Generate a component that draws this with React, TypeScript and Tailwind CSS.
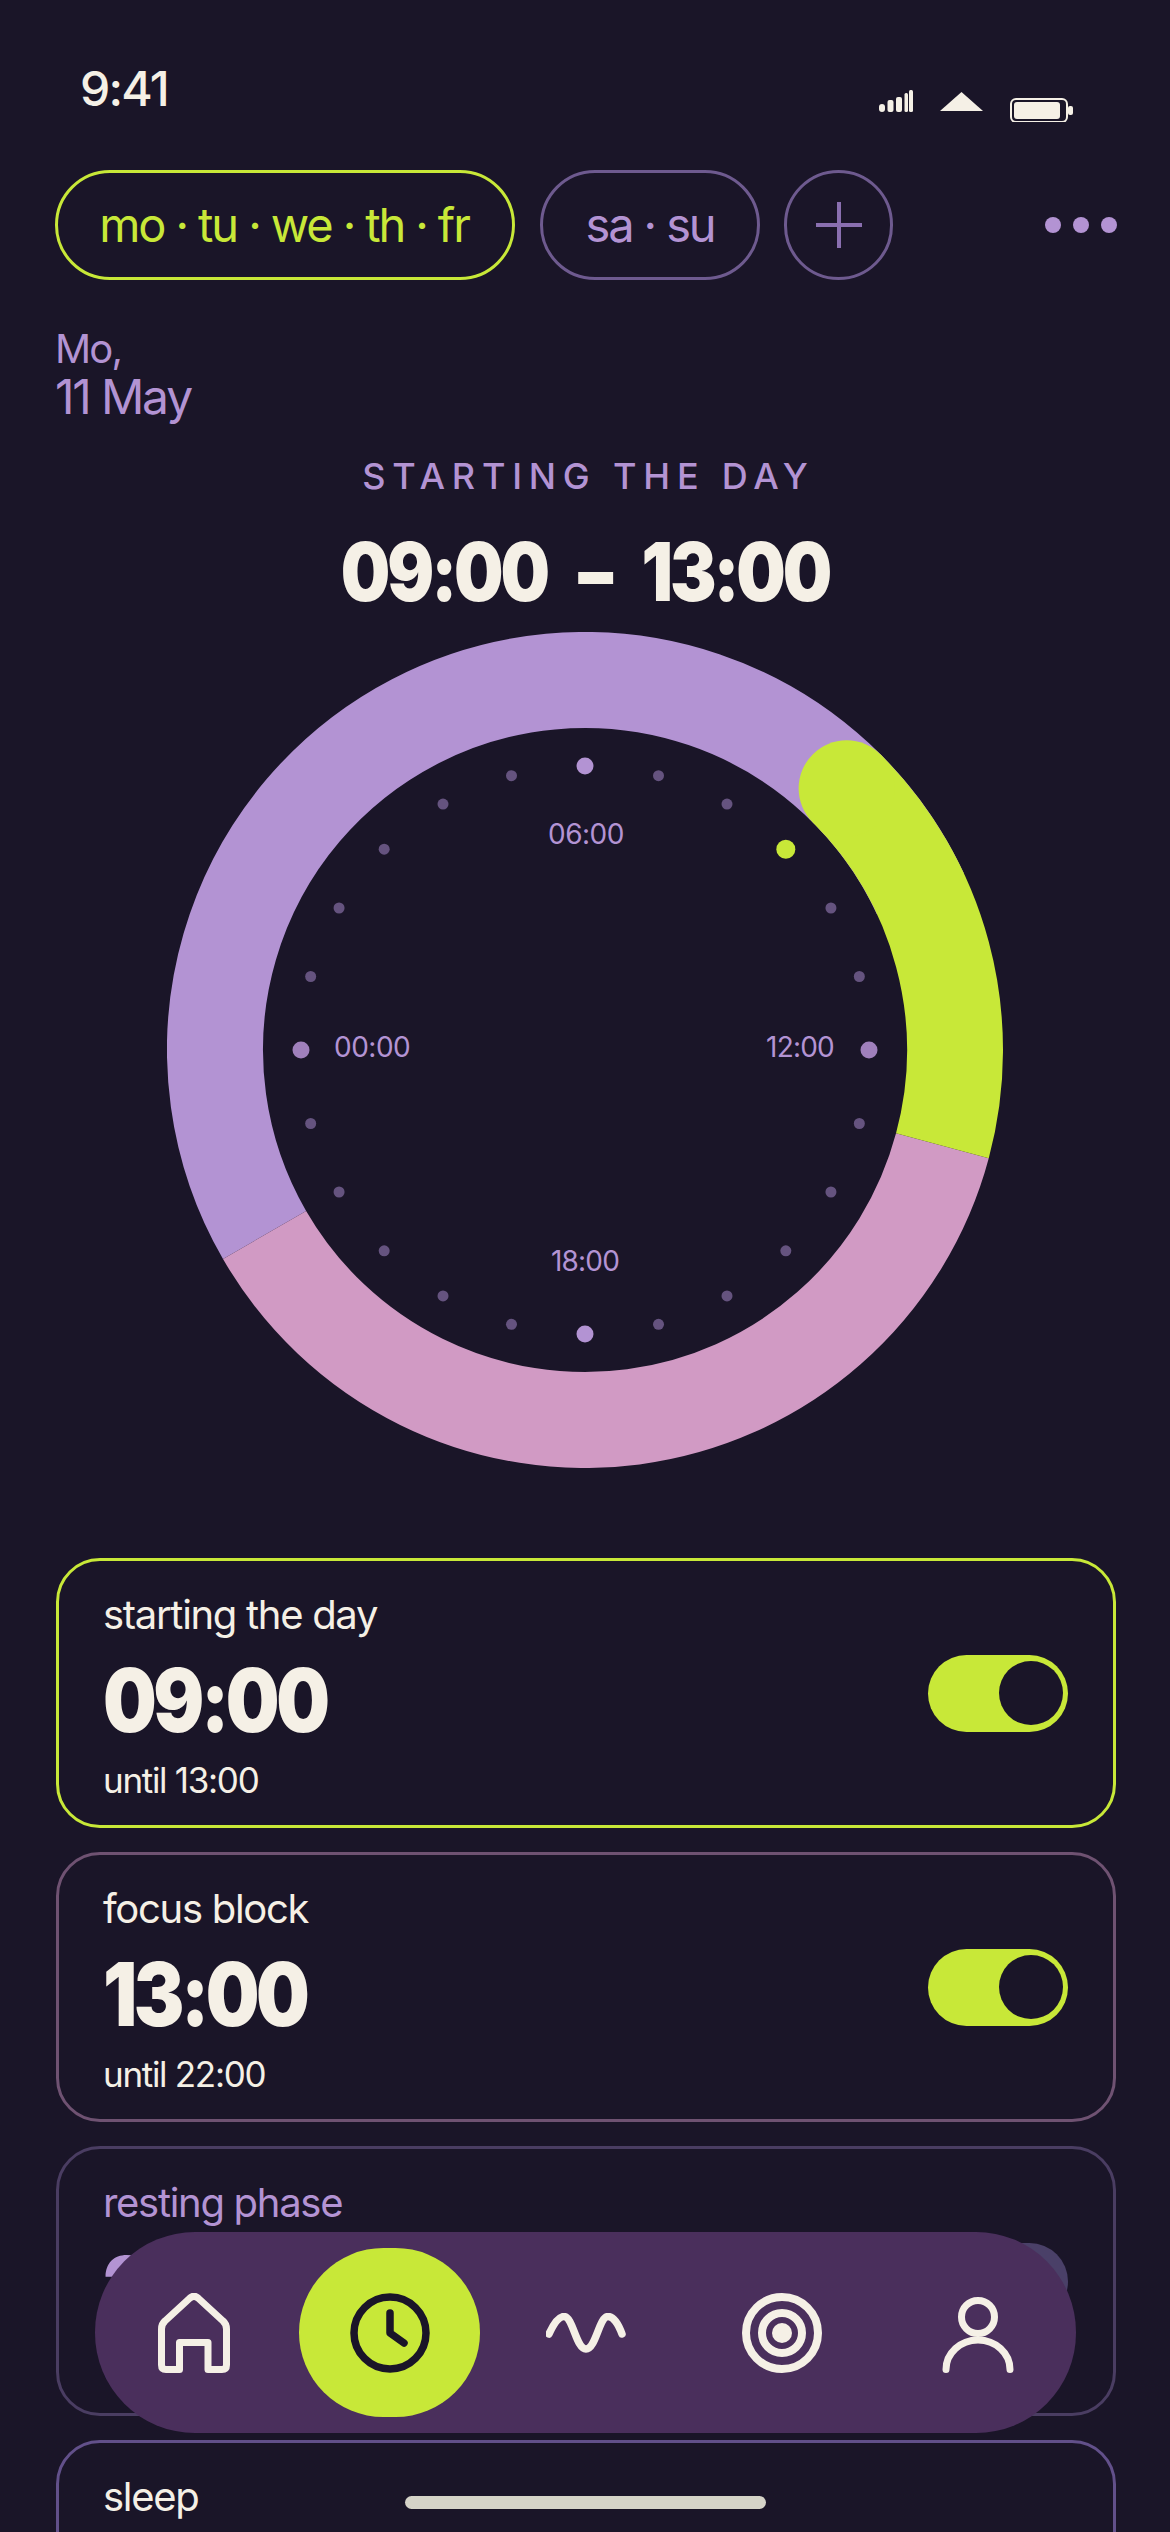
import React from "react";

function polar(r: number, deg: number, c = 418) {
  const a = (deg * Math.PI) / 180;
  return { x: c + r * Math.sin(a), y: c - r * Math.cos(a) };
}

function arc(r: number, from: number, to: number) {
  const s = polar(r, from);
  const e = polar(r, to);
  const large = to - from > 180 ? 1 : 0;
  return `M${s.x} ${s.y} A${r} ${r} 0 ${large} 1 ${e.x} ${e.y}`;
}

function StatusIcons() {
  return (
    <svg width="194" height="32" viewBox="0 0 194 32" fill="#f5f0e6">
      <rect x="0" y="14" width="6" height="8" rx="3" />
      <rect x="8.5" y="10" width="6" height="12" rx="2" />
      <rect x="17" y="7" width="6" height="15" rx="2" />
      <rect x="25.5" y="3" width="3.5" height="19" rx="1.5" />
      <rect x="30" y="0" width="4" height="22" rx="1.5" />
      <polygon points="61,21 104,21 82.5,2" />
      <rect x="132" y="9" width="56" height="23" rx="5" fill="none" stroke="#f5f0e6" strokeWidth="2" />
      <rect x="135" y="12" width="46" height="17" rx="3" />
      <rect x="189" y="16" width="5" height="9" rx="2" />
    </svg>
  );
}

function Dial() {
  const dots = Array.from({ length: 24 }, (_, i) => i * 15);
  const cap = polar(370, 45);
  return (
    <div className="relative w-[836px] h-[836px] mx-auto mt-[19px]">
      <svg width="836" height="836" viewBox="0 0 836 836" fill="none" className="block">
        <path d={arc(370, 240, 425)} stroke="#b393d3" strokeWidth="96" />
        <path d={arc(370, 105, 240)} stroke="#d19ac4" strokeWidth="96" />
        <path d={arc(370, 45, 105)} stroke="#c8e838" strokeWidth="96" />
        <circle cx={cap.x} cy={cap.y} r="48" fill="#c8e838" />
        {dots.map((d) => {
          const p = polar(284, d);
          const big = d % 90 === 0;
          const green = d === 45;
          const side = d === 90 || d === 270;
          return (
            <circle
              key={d}
              cx={p.x}
              cy={p.y}
              r={green ? 9.5 : big ? 8.5 : 5.5}
              fill={green ? "#c8e838" : side ? "#a080bc" : big ? "#b393d3" : "#65537f"}
            />
          );
        })}
      </svg>
      <span className="absolute left-[167px] top-[401px] w-[74px] text-center text-[28px] leading-[28px] text-[#b393d3] tracking-[-0.5px]">00:00</span>
      <span className="absolute left-[596px] top-[401px] w-[74px] text-center text-[28px] leading-[28px] text-[#b393d3] tracking-[-0.8px]">12:00</span>
      <span className="absolute left-[381px] top-[188px] w-[74px] text-center text-[28px] leading-[28px] text-[#b393d3] tracking-[-0.5px]">06:00</span>
      <span className="absolute left-[381px] top-[615px] w-[74px] text-center text-[28px] leading-[28px] text-[#b393d3] tracking-[-0.8px]">18:00</span>
    </div>
  );
}

function Card({
  label,
  time,
  until,
  border,
  dim,
  on,
}: {
  label: string;
  time: string;
  until: string;
  border: string;
  dim?: boolean;
  on?: boolean;
}) {
  const color = dim ? "text-[#b393d3]" : "text-[#f5f0e6]";
  return (
    <div className={`h-[270px] shrink-0 rounded-[44px] border-[3px] ${border} pl-[44px] pr-[45px] pt-[35px] flex items-center justify-between`}>
      <div className="self-start flex flex-col">
        <div className={`text-[40px] leading-[38px] tracking-[-1.3px] ${color}`}>{label}</div>
        <div className={`mt-[22px] text-[88px] leading-[88px] font-black tracking-[-4px] origin-left scale-x-[0.86] ${color}`}>{time}</div>
        <div className={`mt-[19px] text-[35px] leading-[34px] tracking-[-1.3px] ${color}`}>{until}</div>
      </div>
      <div className={`w-[140px] h-[77px] -mt-[35px] rounded-full flex items-center ${on ? "bg-[#c8e838] justify-end pr-[5px]" : "bg-[#4a4068] justify-start pl-[5px]"}`}>
        <div className="w-[64px] h-[64px] rounded-full bg-[#1a1528]" />
      </div>
    </div>
  );
}

function HomeIcon() {
  return (
    <svg width="72" height="80" viewBox="0 0 72 80" fill="none" stroke="#f5f0e6" strokeWidth="7" strokeLinejoin="round" strokeLinecap="round">
      <path d="M32 5 L7 28 Q3.5 31 3.5 36 V72 Q3.5 76.5 8 76.5 H21.5 V49.5 H50 V76.5 H64 Q68.5 76.5 68.5 72 V36 Q68.5 31 65 28 L40 5 Q36 1.5 32 5 Z" />
    </svg>
  );
}

function ClockIcon() {
  return (
    <svg width="80" height="80" viewBox="0 0 80 80" fill="none" stroke="#1a1528" strokeWidth="7.5" strokeLinecap="round" strokeLinejoin="round">
      <circle cx="40" cy="40" r="36" />
      <path d="M40 20 V40 L54 50" />
    </svg>
  );
}

function WaveIcon() {
  return (
    <svg width="80" height="40" viewBox="0 0 80 40" fill="none" stroke="#f5f0e6" strokeWidth="7.5" strokeLinecap="round">
      <path d="M3 21 C8 10 13 3.5 18 3.5 C27 3.5 30 36 40 36 C50 36 53 3.5 62 3.5 C67 3.5 72 10 76 21" />
    </svg>
  );
}

function TargetIcon() {
  return (
    <svg width="80" height="80" viewBox="0 0 80 80" fill="none" stroke="#f5f0e6" strokeWidth="8">
      <circle cx="40" cy="40" r="36" />
      <circle cx="40" cy="40" r="20" />
      <circle cx="40" cy="40" r="10" fill="#f5f0e6" stroke="none" />
    </svg>
  );
}

function UserIcon() {
  return (
    <svg width="74" height="80" viewBox="0 0 74 80" fill="none" stroke="#f5f0e6" strokeWidth="7" strokeLinecap="round">
      <circle cx="37" cy="24" r="16.5" />
      <path d="M5 76.5 A32 29.5 0 0 1 69 76.5" />
    </svg>
  );
}

function Nav() {
  return (
    <div className="absolute left-[95px] top-[2232px] w-[981px] h-[201px] rounded-[100px] bg-[#4a2f5c] flex items-center justify-center">
      <div className="w-[196px] flex items-center justify-center"><HomeIcon /></div>
      <div className="w-[196px] flex items-center justify-center">
        <div className="w-[181px] h-[169px] rounded-full bg-[#c8e838] flex items-center justify-center"><ClockIcon /></div>
      </div>
      <div className="w-[196px] flex items-center justify-center"><WaveIcon /></div>
      <div className="w-[196px] flex items-center justify-center"><TargetIcon /></div>
      <div className="w-[196px] flex items-center justify-center"><UserIcon /></div>
    </div>
  );
}

export default function App() {
  return (
    <div className="relative w-[1170px] h-[2532px] overflow-hidden bg-[#1a1528] font-['Inter',sans-serif]">
      <div className="h-[170px] flex justify-between pl-[80px] pr-[97px]">
        <div className="mt-[65px] text-[48px] leading-[48px] font-medium tracking-[-1.8px] text-[#f5f0e6]">9:41</div>
        <div className="mt-[90px]"><StatusIcons /></div>
      </div>

      <div className="h-[110px] pl-[55px] pr-[53px] flex items-center">
        <div className="h-[110px] w-[460px] pr-[2px] rounded-full border-[3px] border-[#c8e838] flex items-center justify-center text-[47px] tracking-[-2.1px] text-[#c8e838]">mo · tu · we · th · fr</div>
        <div className="ml-[25px] h-[110px] w-[220px] rounded-full border-[3px] border-[#6e5a8f] flex items-center justify-center text-[47px] tracking-[-2.1px] text-[#b393d3]">sa · su</div>
        <div className="ml-[24px] h-[110px] w-[109px] rounded-full border-[3px] border-[#6e5a8f] flex items-center justify-center">
          <svg width="46" height="46" viewBox="0 0 46 46" stroke="#8a6fb0" strokeWidth="4"><path d="M23 0 V46 M0 23 H46" /></svg>
        </div>
        <div className="ml-auto flex gap-[12px]">
          <div className="w-[16px] h-[16px] rounded-full bg-[#b393d3]" />
          <div className="w-[16px] h-[16px] rounded-full bg-[#b393d3]" />
          <div className="w-[16px] h-[16px] rounded-full bg-[#b393d3]" />
        </div>
      </div>

      <div className="mt-[49px] pl-[55px] text-[#b393d3]">
        <div className="text-[40px] leading-[40px] tracking-[-1.8px]">Mo,</div>
        <div className="mt-[4px] text-[48px] leading-[48px] tracking-[-2.2px]">11 May</div>
      </div>

      <div className="mt-[37px] pl-[7px] text-center text-[36px] leading-[36px] font-medium tracking-[6.8px] text-[#b393d3]">STARTING THE DAY</div>
      <div className="mt-[37px] text-center text-[81px] leading-[82px] font-black tracking-[-3.6px] scale-x-[0.86] [word-spacing:24px] text-[#f5f0e6]">09:00 – 13:00</div>

      <Dial />

      <div className="mt-[90px] pl-[56px] pr-[54px] flex flex-col gap-[24px]">
        <Card label="starting the day" time="09:00" until="until 13:00" border="border-[#c8e838]" on />
        <Card label="focus block" time="13:00" until="until 22:00" border="border-[#6f5272]" on />
        <Card label="resting phase" time="22:00" until="until 07:00" border="border-[#4a3d62]" dim />
        <Card label="sleep" time="07:00" until="until 09:00" border="border-[#62508a]" on />
      </div>

      <Nav />

      <div className="absolute left-[405px] top-[2496px] w-[361px] h-[13px] rounded-full bg-[#d5d3c8]" />
    </div>
  );
}
